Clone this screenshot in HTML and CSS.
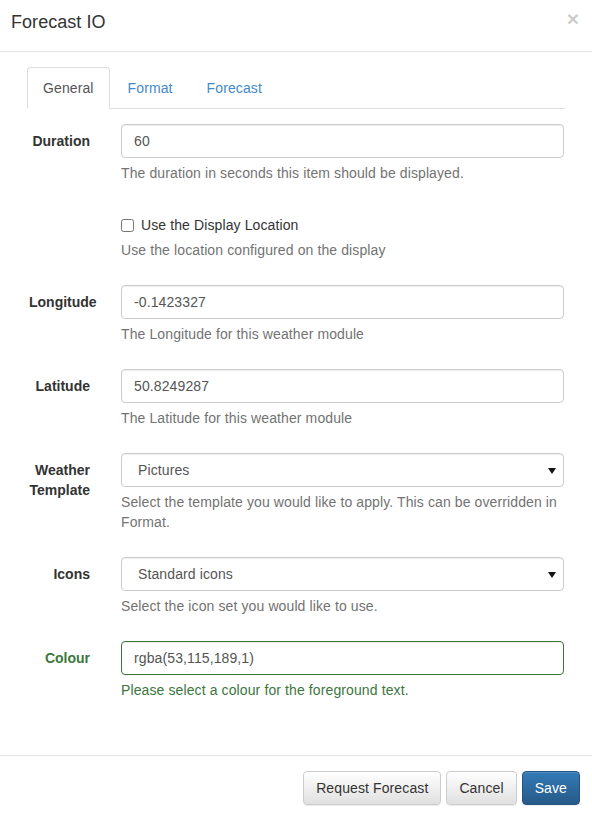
FILE: index.html
```html
<!DOCTYPE html>
<html>
<head>
<meta charset="utf-8">
<link rel="stylesheet" href="styles.css">
</head>
<body>
<div class="modal">
  <div class="modal-header">
    <h4 class="modal-title">Forecast IO</h4>
    <span class="close">×</span>
  </div>
  <div class="modal-body">
    <ul class="nav-tabs">
      <li class="active"><a>General</a></li>
      <li><a>Format</a></li>
      <li><a>Forecast</a></li>
    </ul>
    <div class="tab-content">
      <div class="form-group">
        <label class="control-label">Duration</label>
        <div class="field">
          <div class="form-control">60</div>
          <p class="help-block">The duration in seconds this item should be displayed.</p>
        </div>
      </div>
      <div class="form-group">
        <span class="control-label"></span>
        <div class="field">
          <div class="checkbox"><label><input type="checkbox"> Use the Display Location</label></div>
          <p class="help-block">Use the location configured on the display</p>
        </div>
      </div>
      <div class="form-group">
        <label class="control-label">Longitude</label>
        <div class="field">
          <div class="form-control">-0.1423327</div>
          <p class="help-block">The Longitude for this weather module</p>
        </div>
      </div>
      <div class="form-group">
        <label class="control-label">Latitude</label>
        <div class="field">
          <div class="form-control">50.8249287</div>
          <p class="help-block">The Latitude for this weather module</p>
        </div>
      </div>
      <div class="form-group">
        <label class="control-label">Weather Template</label>
        <div class="field">
          <div class="form-control select">Pictures</div>
          <p class="help-block">Select the template you would like to apply. This can be overridden in Format.</p>
        </div>
      </div>
      <div class="form-group">
        <label class="control-label">Icons</label>
        <div class="field">
          <div class="form-control select">Standard icons</div>
          <p class="help-block">Select the icon set you would like to use.</p>
        </div>
      </div>
      <div class="form-group has-success">
        <label class="control-label">Colour</label>
        <div class="field">
          <div class="form-control">rgba(53,115,189,1)</div>
          <p class="help-block">Please select a colour for the foreground text.</p>
        </div>
      </div>
    </div>
  </div>
  <div class="modal-footer">
    <button class="btn btn-default">Request Forecast</button>
    <button class="btn btn-default">Cancel</button>
    <button class="btn btn-primary">Save</button>
  </div>
</div>
</body>
</html>
```
FILE: styles.css
```css
* { box-sizing: border-box; }
html, body { margin: 0; padding: 0; background: #fff; }
body {
  font-family: "Liberation Sans", Arial, sans-serif;
  font-size: 14px;
  line-height: 20px;
  letter-spacing: 0.11px;
  color: #333;
}
.modal { width: 592px; }
.modal-header {
  display: flex;
  justify-content: space-between;
  align-items: flex-start;
  padding: 10px 13px 16px 11px;
  border-bottom: 1px solid #e5e5e5;
}
.modal-title {
  margin: 0;
  font-size: 18px;
  font-weight: normal;
  line-height: 25px;
  letter-spacing: 0.05px;
  color: #333;
}
.close {
  font-size: 21px;
  font-weight: bold;
  line-height: 21px;
  color: #000;
  opacity: .2;
  margin-top: -2px;
}
.modal-body { padding: 15px 27px 30px 27px; }
.nav-tabs {
  list-style: none;
  margin: 0;
  padding: 0;
  display: flex;
  border-bottom: 1px solid #ddd;
}
.nav-tabs li { margin-bottom: -1px; }
.nav-tabs a {
  display: block;
  padding: 10px 15px;
  margin-right: 2px;
  line-height: 20px;
  border: 1px solid transparent;
  border-radius: 4px 4px 0 0;
  color: #428bca;
}
.nav-tabs li.active a {
  color: #555;
  background: #fff;
  border-color: #ddd #ddd transparent;
}
.tab-content { padding: 15px 1px 0 0; }
.form-group {
  display: grid;
  grid-template-columns: 63px 1fr;
  column-gap: 31px;
  margin-bottom: 15px;
}
.control-label {
  display: block;
  padding: 7px 0 0 2px;
  text-align: right;
  font-weight: bold;
  letter-spacing: 0;
  color: #333;
}
.form-control {
  height: 34px;
  padding: 6px 12px;
  border: 1px solid #ccc;
  border-radius: 4px;
  box-shadow: inset 0 1px 1px rgba(0,0,0,.075);
  color: #555;
  line-height: 20px;
  background: #fff;
}
.select { position: relative; padding-left: 16px; }
.select::after {
  content: "";
  position: absolute;
  right: 7px;
  top: 14px;
  border-left: 4px solid transparent;
  border-right: 4px solid transparent;
  border-top: 6px solid #111;
}
.help-block {
  margin: 5px 0 10px;
  color: #737373;
}
.checkbox {
  padding-top: 7px;
  min-height: 27px;
}
.checkbox label {
  display: flex;
  align-items: center;
  height: 20px;
  font-weight: normal;
  color: #333;
}
.checkbox input {
  width: 13px;
  height: 13px;
  margin: 1px 7px 0 0;
}
.has-success .control-label,
.has-success .help-block { color: #3c763d; }
.has-success .form-control { border-color: #3c763d; }
.modal-footer {
  display: flex;
  justify-content: flex-end;
  gap: 5px;
  padding: 15px 12px 15px 15px;
  border-top: 1px solid #e5e5e5;
}
.btn {
  font-family: "Liberation Sans", Arial, sans-serif;
  font-size: 14px;
  line-height: 20px;
  letter-spacing: 0.11px;
  height: 34px;
  padding: 6px 12px;
  border-radius: 4px;
  border: 1px solid #ccc;
  cursor: pointer;
}
.btn-default {
  color: #333;
  background: linear-gradient(to bottom, #fff 0%, #e0e0e0 100%);
  border-color: #ccc;
  box-shadow: inset 0 1px 0 rgba(255,255,255,.15), 0 1px 1px rgba(0,0,0,.075);
}
.btn-primary {
  color: #fff;
  background: linear-gradient(to bottom, #337ab7 0%, #265a88 100%);
  border-color: #245580;
  box-shadow: inset 0 1px 0 rgba(255,255,255,.15), 0 1px 1px rgba(0,0,0,.075);
}
```
